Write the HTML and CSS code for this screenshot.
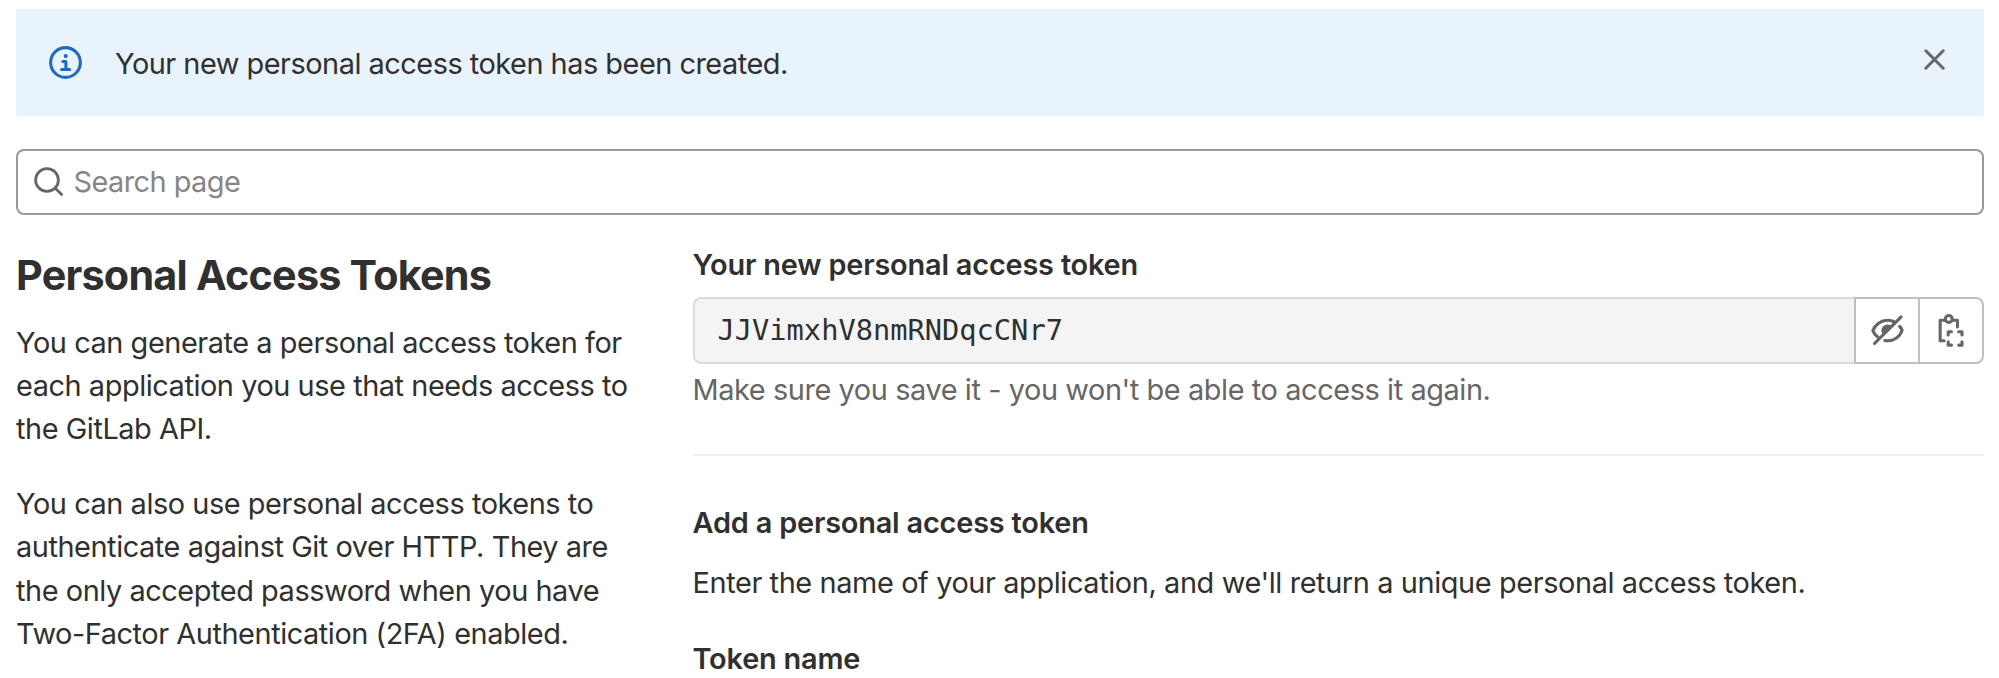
FILE: index.html
```html
<!DOCTYPE html>
<html lang="en">
<head>
<meta charset="utf-8">
<title>Personal Access Tokens</title>
<link rel="stylesheet" href="styles.css">
</head>
<body>
<main class="page">
  <div class="alert" role="status">
    <svg class="alert-icon" viewBox="0 0 16 16" fill="none" stroke="currentColor" stroke-width="1.5" stroke-linecap="round" stroke-linejoin="round"><circle cx="8" cy="8" r="7.2"/><circle cx="8.1" cy="4.900" r="1" fill="currentColor" stroke="none"/><path d="M6.700 7.500H8.200V11.300M6.100 11.400H10"/></svg>
    <p class="alert-text">Your new personal access token has been created.</p>
    <button class="close" type="button" aria-label="Dismiss"><svg viewBox="0 0 21 21" fill="none" stroke="currentColor" stroke-width="3" stroke-linecap="round"><path d="M1.8 1.8 19.2 19.2M19.2 1.8 1.8 19.2"/></svg></button>
  </div>

  <div class="search">
    <svg class="search-icon" viewBox="0 0 30 30" fill="none" stroke="currentColor" stroke-width="2.8" stroke-linecap="round"><circle cx="13" cy="13" r="11.4"/><path d="M21.3 21.3 27.6 27.6"/></svg>
    <span class="search-text">Search page</span>
  </div>

  <div class="columns">
    <section class="intro">
      <h1 class="title">Personal Access Tokens</h1>
      <p class="para">You can generate a personal access token for<br>each application you use that needs access to<br>the GitLab API.</p>
      <p class="para">You can also use personal access tokens to<br>authenticate against Git over HTTP. They are<br>the only accepted password when you have<br>Two-Factor Authentication (2FA) enabled.</p>
    </section>
    <section class="content">
      <h2 class="label">Your new personal access token</h2>
      <div class="token">
        <div class="token-value">JJVimxhV8nmRNDqcCNr7</div>
        <button class="token-btn" type="button" aria-label="Hide token"><svg class="btn-icon" viewBox="0 0 16 16" fill="none" stroke="currentColor" stroke-width="1.5" stroke-linecap="round" stroke-linejoin="round"><path d="M3.300 11.200C2 10.200 1.200 9 .9 8 2 5.200 4.800 3 8 3c1 0 2 .25 2.900.65M13.900 6c.6.7 1 1.400 1.200 2-1 2.900-3.900 5-7.100 5-.4 0-.9 0-1.300-.1"/><path d="M1.700 14.300 14.600 1.400"/><path d="M5.900 10.100A2.900 2.900 0 0 1 10.100 5.900Z" fill="currentColor" stroke="none"/></svg></button>
        <button class="token-btn" type="button" aria-label="Copy token"><svg class="btn-icon" viewBox="0 0 16 16" fill="none" stroke="currentColor" stroke-width="1.500" stroke-linecap="round" stroke-linejoin="round"><path d="M4.400 13H2.500V3H5M8.400 3H10.900V6.300"/><circle cx="6.700" cy="2.400" r="1.650"/><path d="M6.400 10.200V8.600H8M11.500 8.600H13.100V10.200M13.100 13.500V15.100H11.500M8 15.100H6.400V13.500"/></svg></button>
      </div>
      <p class="note">Make sure you save it - you won't be able to access it again.</p>
      <hr class="rule">
      <h2 class="label">Add a personal access token</h2>
      <p class="desc">Enter the name of your application, and we'll return a unique personal access token.</p>
      <h2 class="label">Token name</h2>
    </section>
  </div>
</main>
</body>
</html>
```
FILE: styles.css
```css
* { box-sizing: border-box; }
body {
  margin: 0;
  background: #fff;
  color: #303030;
  font-family: Inter, "Liberation Sans", sans-serif;
  font-size: 28.9px;
  line-height: 43.35px;
  letter-spacing: -0.44px;
  white-space: nowrap;
  height: 678px;
  overflow: hidden;
}
h1, h2, p { margin: 0; }
button { margin: 0; padding: 0; border: 0; background: none; color: #666; }
svg { display: block; flex: none; }
.page { padding: 9px 15px 0 16px; }
.alert {
  display: flex;
  align-items: flex-start;
  height: 107px;
  padding: 32px 39.500px 0 33px;
  background: #e9f3fc;
}
.alert-icon { width: 33px; height: 33px; margin-top: 5px; color: #1f68c8; }
.alert-text { flex: 1; margin: 1px 0 0 33px; letter-spacing: -0.49px; }
.close { margin-top: 8px; }
.close svg { width: 21px; height: 21px; }
.search {
  display: flex;
  align-items: center;
  height: 66px;
  margin-top: 33px;
  padding-left: 16px;
  border: 2px solid #999;
  border-radius: 8px;
}
.search-icon { width: 30px; height: 30px; color: #666; }
.search-text { margin-left: 9.500px; color: #868686; letter-spacing: -0.550px; }
.columns { display: flex; margin-top: 33px; }
.intro { width: 676.500px; }
.title { font-size: 41.300px; line-height: 54px; font-weight: 700; letter-spacing: -0.780px; }
.para { margin-top: 18.500px; }
.para + .para { margin-top: 31.500px; }
.content { flex: 1; }
.label { font-size: inherit; font-weight: 600; letter-spacing: -0.190px; }
.content > .label:first-child { margin-top: -5px; }
.token { display: flex; height: 67px; margin-top: 11px; }
.token-value {
  flex: 1;
  padding-left: 23px;
  border: 2px solid #dbdbdb;
  border-right: 0;
  border-radius: 8px 0 0 8px;
  background: #f4f4f4;
  font-family: "DejaVu Sans Mono", monospace;
  font-size: 28.700px;
  line-height: 63px;
  letter-spacing: 0;
}
.token-btn {
  display: flex;
  align-items: center;
  justify-content: center;
  width: 64px;
  border: 2px solid #bfbfbf;
  border-right: 0;
}
.token-btn:last-child { width: 66px; border-right: 2px solid #bfbfbf; border-radius: 0 8px 8px 0; }
.btn-icon { width: 33px; height: 33px; }
.note { margin-top: 4px; color: #666; letter-spacing: -0.410px; }
.rule { height: 2px; margin: 42px 0 45px; border: 0; background: #eee; }
.desc { margin: 17px 0 33px; letter-spacing: -0.390px; }
```
